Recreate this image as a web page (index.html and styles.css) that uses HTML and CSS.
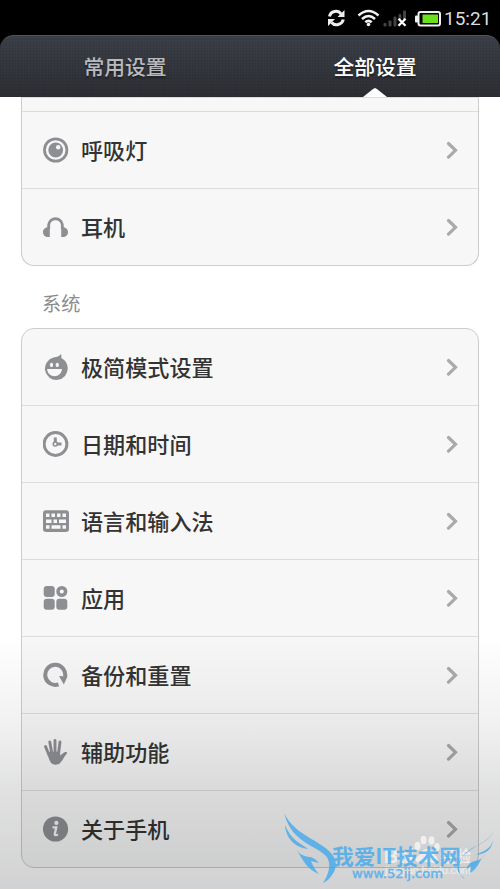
FILE: index.html
```html
<!DOCTYPE html>
<html lang="zh-CN">
<head>
<meta charset="utf-8">
<title>设置</title>
<link rel="stylesheet" href="styles.css">
</head>
<body>
<div class="phone">
  <div class="status">
    <svg class="status-icons" width="124" height="35" viewBox="320 0 124 35">
      <g fill="none" stroke="#eee" stroke-width="3">
        <path d="M329.500 16.500C330.500 11 338 9.500 341 14"/>
        <path d="M343.300 19.500C342 25 335 26.500 331.500 22.500"/>
      </g>
      <path d="M344.500 10V17H337.500ZM328 26V19H335Z" fill="#eee"/>
      <g fill="none" stroke="#f2f2f2" stroke-width="2.500">
        <path d="M358.500 15.500Q368.500 6.500 378.500 15.500"/>
        <path d="M362 19Q368.500 13 375 19"/>
        <path d="M365.300 22.300Q368.500 19.500 371.700 22.300"/>
      </g>
      <circle cx="368.500" cy="24.500" r="1.800" fill="#f2f2f2"/>
      <g fill="#444">
        <rect x="383.500" y="23" width="3" height="3.500" rx="1"/>
        <rect x="388.500" y="20.500" width="3" height="6" rx="1"/>
        <rect x="393.500" y="16.500" width="3" height="10" rx="1"/>
        <rect x="398.500" y="14" width="2.800" height="6" rx="1"/>
        <rect x="403" y="10.500" width="3" height="10" rx="1"/>
      </g>
      <path d="M398.500 18.700L405.500 25.800M405.500 18.700L398.500 25.800" stroke="#fff" stroke-width="2.300"/>
      <rect x="418.500" y="12" width="21.500" height="13.500" rx="2" fill="none" stroke="#f2f2f2" stroke-width="2"/>
      <rect x="415" y="15.500" width="3" height="7" rx="1" fill="#f2f2f2"/>
      <rect x="422.500" y="14.500" width="15.500" height="8.500" fill="#6be01d"/>
    </svg>
    <span class="clock">15:21</span>
  </div>
  <nav class="tabs">
    <div class="tab">常用设置</div>
    <div class="tab active">全部设置</div>
  </nav>
  <main class="content">
    <section class="card card-top">
      <div class="row stub"></div>
      <div class="row">
        <svg class="icon" viewBox="0 0 26 26"><circle cx="12.700" cy="13" r="11.200" fill="none" stroke="#8e8f93" stroke-width="2.800"/><circle cx="12.700" cy="13" r="7.400" fill="#8e8f93"/><circle cx="15.200" cy="10.300" r="2.200" fill="#f7f7f7"/></svg>
        <span class="label">呼吸灯</span>
        <svg class="chevron" viewBox="0 0 12 18"><path d="M2.500 2.500L9.500 9.300L2.500 16.100"/></svg>
      </div>
      <div class="row">
        <svg class="icon" viewBox="0 0 26 26"><path d="M5.700 15V10.500A6.900 6.900 0 0 1 19.300 10.500V15" fill="none" stroke="#8e8f93" stroke-width="2.800"/><path d="M6.800 13V23H5C1.500 23 0 20.500 0 18C0 15 2.500 13 6.800 13ZM18.200 13V23H20C23.500 23 25 20.500 25 18C25 15 22.500 13 18.200 13Z" fill="#8e8f93"/></svg>
        <span class="label">耳机</span>
        <svg class="chevron" viewBox="0 0 12 18"><path d="M2.500 2.500L9.500 9.300L2.500 16.100"/></svg>
      </div>
    </section>
    <h2 class="heading">系统</h2>
    <section class="card">
      <div class="row">
        <svg class="icon" viewBox="0 0 26 26"><path d="M10.500 3.500C14 3 16.500 2.500 17.800 0C18.700 1.500 18.500 3 18.200 4C22 6 24.700 9.500 24.700 14A11.400 11.400 0 1 1 10.500 3.500Z" fill="#8e8f93"/><rect x="7" y="8.700" width="3" height="4.200" rx="1.500" fill="#f7f7f7"/><rect x="12.800" y="8.700" width="3" height="4.200" rx="1.500" fill="#f7f7f7"/><path d="M4 15H19C18.500 19.500 15.500 22.200 11.500 22.200S4.500 19.500 4 15Z" fill="#f7f7f7"/></svg>
        <span class="label">极简模式设置</span>
        <svg class="chevron" viewBox="0 0 12 18"><path d="M2.500 2.500L9.500 9.300L2.500 16.100"/></svg>
      </div>
      <div class="row">
        <svg class="icon" viewBox="0 0 26 26"><g fill="none" stroke="#8e8f93"><circle cx="12.500" cy="13" r="11.400" stroke-width="3"/><path d="M12.300 11.500V6.500M13.800 13H18.500" stroke-width="3"/><circle cx="12.300" cy="13" r="2" stroke-width="1.600"/></g></svg>
        <span class="label">日期和时间</span>
        <svg class="chevron" viewBox="0 0 12 18"><path d="M2.500 2.500L9.500 9.300L2.500 16.100"/></svg>
      </div>
      <div class="row">
        <svg class="icon" viewBox="0 0 26 26"><rect x="0" y="2.300" width="26" height="21.700" rx="3" fill="#8e8f93"/><g fill="#f7f7f7"><path d="M3 5.600h3.500v3.500H3zM8.500 5.600H12v3.500H8.500zM14 5.600h3.500v3.500H14zM19.500 5.600H23v3.500h-3.500zM3 11.400h5.500v3.500H3zM10.500 11.400H14v3.500h-3.500zM16 11.400h7v3.500h-7zM3 17.200h3.500v3.500H3zM8.500 17.200h9v3.500h-9zM19.500 17.200H23v3.500h-3.500z"/></g></svg>
        <span class="label">语言和输入法</span>
        <svg class="chevron" viewBox="0 0 12 18"><path d="M2.500 2.500L9.500 9.300L2.500 16.100"/></svg>
      </div>
      <div class="row">
        <svg class="icon" viewBox="0 0 26 26"><g fill="#8e8f93"><rect x=".7" y="1" width="11" height="11" rx="3"/><rect x=".7" y="13.700" width="11" height="11" rx="3"/><rect x="13.300" y="13.700" width="11" height="11" rx="3"/></g><circle cx="18.800" cy="6.500" r="3.800" fill="none" stroke="#8e8f93" stroke-width="3.500"/></svg>
        <span class="label">应用</span>
        <svg class="chevron" viewBox="0 0 12 18"><path d="M2.500 2.500L9.500 9.300L2.500 16.100"/></svg>
      </div>
      <div class="row">
        <svg class="icon" viewBox="0 0 26 26"><path d="M15.500 22.300A10 10 0 1 1 22 15" fill="none" stroke="#8e8f93" stroke-width="4"/><path d="M16 14L24.500 14.500L20.800 22.500Z" fill="#8e8f93"/></svg>
        <span class="label">备份和重置</span>
        <svg class="chevron" viewBox="0 0 12 18"><path d="M2.500 2.500L9.500 9.300L2.500 16.100"/></svg>
      </div>
      <div class="row">
        <svg class="icon" viewBox="0 0 26 26"><g fill="none" stroke="#8e8f93" stroke-width="2.900" stroke-linecap="round"><path d="M2.500 7.500L6 16M6.800 3L8.700 14M12 1.500V14M17 3L15.600 14"/></g><path d="M4 13L17 12.500L17.200 16.500C19 15.500 20.500 13.200 22.300 13C24 12.800 24.500 14 23.500 15C20.500 18 19 24 15 25.300C12.500 26 9.500 25.800 7.800 23.500C6 21 5 17 4 13Z" fill="#8e8f93"/></svg>
        <span class="label">辅助功能</span>
        <svg class="chevron" viewBox="0 0 12 18"><path d="M2.500 2.500L9.500 9.300L2.500 16.100"/></svg>
      </div>
      <div class="row">
        <svg class="icon" viewBox="0 0 26 26"><circle cx="12.500" cy="13" r="12.600" fill="#8e8f93"/><circle cx="13.400" cy="6.900" r="2.100" fill="#f7f7f7"/><path d="M9.500 11.300H13.300L11.700 18.300Q11.700 19.800 15 18.500" fill="none" stroke="#f7f7f7" stroke-width="2.300"/></svg>
        <span class="label">关于手机</span>
        <svg class="chevron" viewBox="0 0 12 18"><path d="M2.500 2.500L9.500 9.300L2.500 16.100"/></svg>
      </div>
    </section>
  </main>
  <div class="shade"></div>
  <svg class="watermark" width="230" height="89" viewBox="270 800 230 89">
    <g class="wm-white">
      <ellipse cx="417.500" cy="846" rx="3" ry="4.200"/><ellipse cx="423.500" cy="840" rx="3" ry="4.300"/><ellipse cx="431.500" cy="840.500" rx="3" ry="4.300"/><ellipse cx="437" cy="847" rx="2.700" ry="4"/>
      <path d="M427 849C422 849 421 854 418 856C414 859 416 864 421 863Q427 861 433 863C438 864 439 859 436 856C433 854 432 849 427 849Z"/>
      <text x="384" y="863" class="wm-baidu" textLength="30">Bai</text>
      <text x="440" y="862" class="wm-exp" textLength="31">经验</text>
      <text x="385" y="874" class="wm-url" textLength="86">jingyan.baidu.com</text>
    </g>
    <g class="wm-blue">
      <path d="M284 813C293 831 310 837 321 845C335 853 340 865 332 875Q328 881 323 883C329 874 332 863 326 856C318 848 306 845 297 836Q288 828 284 813Z"/>
      <path d="M285 825C291 840 300 843 308 849C298 848 286 841 285 825Z"/>
      <path d="M297 850C301 857 308 856 313 858Q317 860 319 863L311 861Q314 869 319 874C308 870 303 861 297 850Z"/>
      <path d="M494 830C490 840 483 842 475 847C462 855 454 865 459 873L465 879C458 876 457 863 464 855C472 845 488 844 494 830Z"/>
      <path d="M493 840C491 850 482 851 476 855C485 854 492 850 493 840ZM485 854C482 861 475 860 470 863Q467 866 466 870L471 866L470 873C478 869 479 861 485 854Z"/>
      <text x="332" y="864" class="wm-title" textLength="129" lengthAdjust="spacingAndGlyphs">我爱IT技术网</text>
      <text x="352" y="878" class="wm-site" textLength="91" lengthAdjust="spacingAndGlyphs">www.52ij.com</text>
    </g>
  </svg>
</div>
</body>
</html>
```
FILE: styles.css
```css
* { box-sizing: border-box; }

body {
  margin: 0;
  background: #fff;
  font-family: "Noto Sans CJK SC", sans-serif;
}

.phone {
  position: relative;
  width: 500px;
  height: 889px;
  overflow: hidden;
  background: linear-gradient(#000 0 60px, #fff 60px);
}

.status {
  display: flex;
  justify-content: flex-end;
  height: 35px;
  padding-right: 8px;
}

.status-icons { flex: none; }

.clock {
  width: 48px;
  font: 19px/38px Roboto, sans-serif;
  color: #ddd;
  white-space: nowrap;
}

.tabs {
  position: relative;
  display: flex;
  height: 62px;
  border-top: 1px solid #53565c;
  border-radius: 14px 14px 0 0;
  background:
    repeating-linear-gradient(90deg, rgba(0, 0, 0, .05) 0 1px, transparent 1px 3px),
    repeating-linear-gradient(rgba(0, 0, 0, .05) 0 1px, transparent 1px 3px),
    linear-gradient(#3c4048, #2d2e34);
}

.tab {
  position: relative;
  flex: 1;
  text-align: center;
  font-size: 20.8px;
  font-weight: 500;
  line-height: 60px;
  color: #b9babd;
  text-shadow: 0 2px 2px rgba(0, 0, 0, .4);
}

.tab.active { color: #fff; }

.tab.active::after {
  content: "";
  position: absolute;
  bottom: 0;
  left: 113px;
  width: 24px;
  height: 9px;
  background: #fff;
  clip-path: polygon(0 100%, 42% 10%, 50% 0, 58% 10%, 100% 100%);
}

.content { padding: 0 21px; }

.card {
  border: 1px solid #ccc;
  border-radius: 13px;
  background: #f7f7f7;
}

.card-top {
  border-top-color: #ddd;
  border-radius: 0 0 13px 13px;
}

.row {
  display: flex;
  align-items: center;
  height: 77px;
  padding: 0 20px 0 21px;
  border-bottom: 1px solid #dcdcdc;
}

.row:last-child { height: 76px; border-bottom: 0; }

.row.stub { height: 14px; }

.icon { flex: none; width: 26px; height: 26px; }

.label {
  flex: 1;
  margin: 0 0 2px 12px;
  font-size: 22.1px;
  font-weight: 500;
  line-height: 32px;
  color: #333;
}

.chevron {
  flex: none;
  width: 12px;
  height: 18px;
  fill: none;
  stroke: #aaa;
  stroke-width: 3.2;
  stroke-linecap: round;
}

.heading {
  height: 62px;
  margin: 0;
  padding-left: 21px;
  font-size: 19.2px;
  font-weight: 400;
  line-height: 75px;
  color: #8c8c8c;
}

.shade {
  position: absolute;
  inset: 635px 0 0;
  background: linear-gradient(rgba(0, 5, 10, 0), rgba(0, 5, 10, .055) 35%, rgba(0, 5, 10, .12) 62%, rgba(0, 5, 10, .18));
}

.watermark {
  position: absolute;
  left: 270px;
  top: 800px;
}

.wm-white { fill: #fff; opacity: .65; }
.wm-blue { fill: #3fa9ee; opacity: .78; }
.wm-baidu { font: bold 20px "Liberation Sans", sans-serif; }
.wm-exp { font-size: 15.5px; font-weight: 500; }
.wm-url { font: 11px "Liberation Sans", sans-serif; }
.wm-title { font-size: 21px; font-weight: 700; }
.wm-site { font: 12.5px "DejaVu Sans", sans-serif; stroke: #3fa9ee; stroke-width: .4; }
```
